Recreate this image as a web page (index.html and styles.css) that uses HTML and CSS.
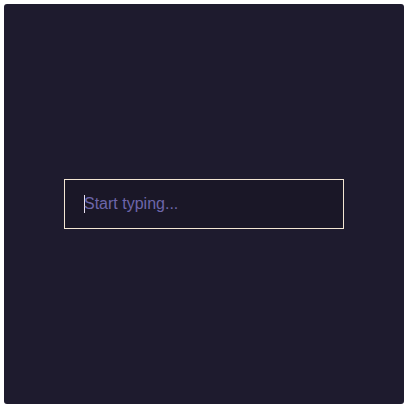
FILE: index.html
```html
<!DOCTYPE html>
<html>
<head>
<meta charset="utf-8">
<link rel="stylesheet" href="styles.css">
</head>
<body>
<div class="panel">
  <div class="field"><span class="caret"></span><span class="placeholder">Start typing...</span></div>
</div>
</body>
</html>
```
FILE: styles.css
```css
html, body { margin: 0; padding: 0; background: #ffffff; }
body { padding: 4px; font-family: "Liberation Sans", Arial, sans-serif; }
.panel {
  width: 400px;
  height: 400px;
  background: #1e1b2e;
  border-radius: 3px;
  display: flex;
  align-items: center;
  justify-content: center;
}
.field {
  box-sizing: border-box;
  width: 280px;
  height: 50px;
  border: 1px solid #f3e6d3;
  background: #1a1727;
  display: flex;
  align-items: center;
  padding-left: 19px;
}
.caret {
  width: 1px;
  height: 18px;
  margin-right: -1px;
  background: #e8e0f0;
}
.placeholder {
  color: #6d66aa;
  font-size: 16px;
  line-height: 18px;
}
```
